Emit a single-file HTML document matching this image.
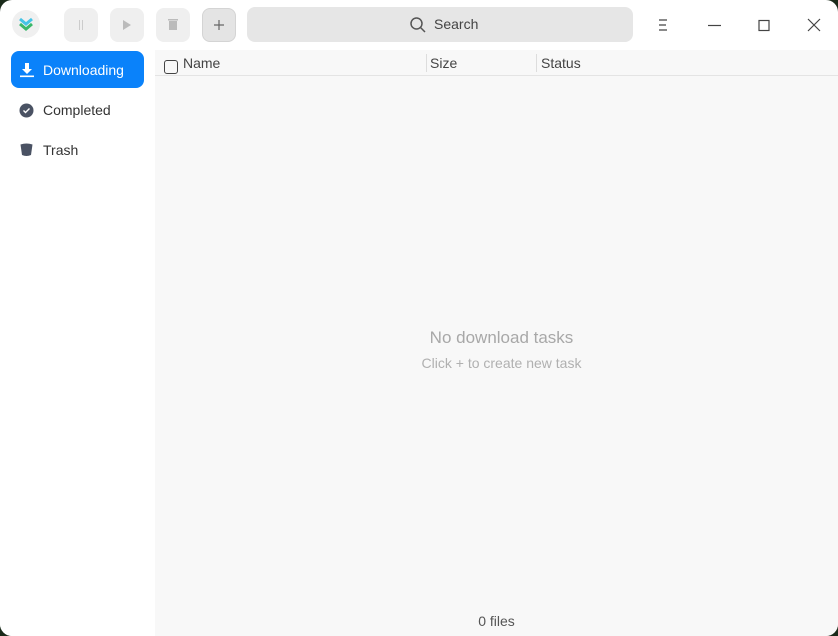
<!DOCTYPE html><html><head><style>
body{margin:0;width:838px;height:636px;background:#1a2a1a;font-family:"Liberation Sans",sans-serif;overflow:hidden}
.win{position:absolute;inset:0;background:#fff;border-radius:12px;overflow:hidden}
.btn{position:absolute;top:8px;width:34px;height:34px;border-radius:8px;background:#efefef}
.side{position:absolute;left:0;top:50px;width:155px;bottom:0;background:#fff}
.item{position:absolute;left:11px;width:133px;height:37px;border-radius:8px;font-size:14px;color:#333;line-height:39px}
.item span{position:absolute;left:32px}
.main{position:absolute;left:155px;top:50px;right:0;bottom:0;background:#f8f8f8}
.hd{position:absolute;top:0;left:0;right:0;height:25px;border-bottom:1px solid #e4e4e4;font-size:14px;color:#444}
</style></head><body><div class="win">
<svg style="position:absolute;left:11px;top:9px" width="30" height="30"><circle cx="15" cy="15" r="14" fill="#f0f0f0"/><path d="M9 10l6 5 6-5" stroke="#45c4e6" stroke-width="3" fill="none"/><path d="M9 15l6 5 6-5" stroke="#3ab86a" stroke-width="3" fill="none"/></svg>
<div class="btn" style="left:64px"><div style="position:absolute;left:15px;top:12px;width:4px;height:10px;border-left:1px solid #ccc;border-right:1px solid #ccc;box-sizing:border-box"></div></div>
<div class="btn" style="left:110px"><svg width="34" height="34"><path d="M13 12l8 5-8 5z" fill="#bbb"/></svg></div>
<div class="btn" style="left:156px"><svg width="34" height="34"><rect x="13" y="13" width="8" height="9" fill="#bbb"/><rect x="12" y="11" width="10" height="1.5" fill="#bbb"/></svg></div>
<div class="btn" style="left:202px;background:#e4e4e4;border:1px solid #d4d4d4;box-sizing:border-box;"><svg width="32" height="32"><path d="M16 11v10M11 16h10" stroke="#666" stroke-width="1.2"/></svg></div>
<div style="position:absolute;left:247px;top:7px;width:386px;height:35px;border-radius:8px;background:#e6e6e6;font-size:14px;color:#444;line-height:35px"><svg style="position:absolute;left:162px;top:9px" width="18" height="18"><circle cx="7.5" cy="7.5" r="5.5" stroke="#555" stroke-width="1.5" fill="none"/><path d="M11.5 11.5l4.5 4.5" stroke="#555" stroke-width="1.5"/></svg><span style="position:absolute;left:187px">Search</span></div>
<svg style="position:absolute;left:650px;top:14px" width="180" height="22" stroke="#444" stroke-width="1.2" fill="none"><path d="M9 6h8M9 11h7M9 16h8"/><path d="M58 11.5h13"/><rect x="109" y="6.5" width="10" height="10"/><path d="M158 5l12 12M170 5l-12 12"/></svg>
<div class="side">
<div class="item" style="top:1px;background:#0a82fa;color:#fff"><svg style="position:absolute;left:8px;top:11px" width="16" height="16"><path d="M6 1h4v6h3l-5 5-5-5h3z" fill="#fff"/><rect x="1" y="13.5" width="14" height="1.6" fill="#fff"/></svg><span>Downloading</span></div>
<div class="item" style="top:41px"><svg style="position:absolute;left:8px;top:12px" width="16" height="16"><circle cx="7.5" cy="7.5" r="7" fill="#4a5263"/><path d="M4.5 7.5l2 2 4-4" stroke="#fff" stroke-width="1.4" fill="none"/></svg><span>Completed</span></div>
<div class="item" style="top:81px"><svg style="position:absolute;left:8px;top:11px" width="16" height="16"><path d="M1.5 2.5Q7.5 0.5 13.5 2.5L12 13Q7.5 15 3 13z" fill="#4a5263"/></svg><span>Trash</span></div>
</div>
<div class="main">
<div class="hd"><div style="position:absolute;left:9px;top:10px;width:12px;height:12px;border:1.5px solid #444;border-radius:3px"></div>
<span style="position:absolute;left:28px;top:5px">Name</span>
<div style="position:absolute;left:271px;top:4px;height:18px;border-left:1px solid #ddd"></div><span style="position:absolute;left:275px;top:5px">Size</span>
<div style="position:absolute;left:381px;top:4px;height:18px;border-left:1px solid #ddd"></div><span style="position:absolute;left:386px;top:5px">Status</span></div>
<div style="position:absolute;left:10px;right:0;top:278px;text-align:center;font-size:17px;color:#a8a8a8">No download tasks</div>
<div style="position:absolute;left:10px;right:0;top:305px;text-align:center;font-size:14px;color:#b0b0b0">Click + to create new task</div>
<div style="position:absolute;left:0;right:0;top:563px;text-align:center;font-size:14px;color:#555">0 files</div>
</div>
</div></body></html>
